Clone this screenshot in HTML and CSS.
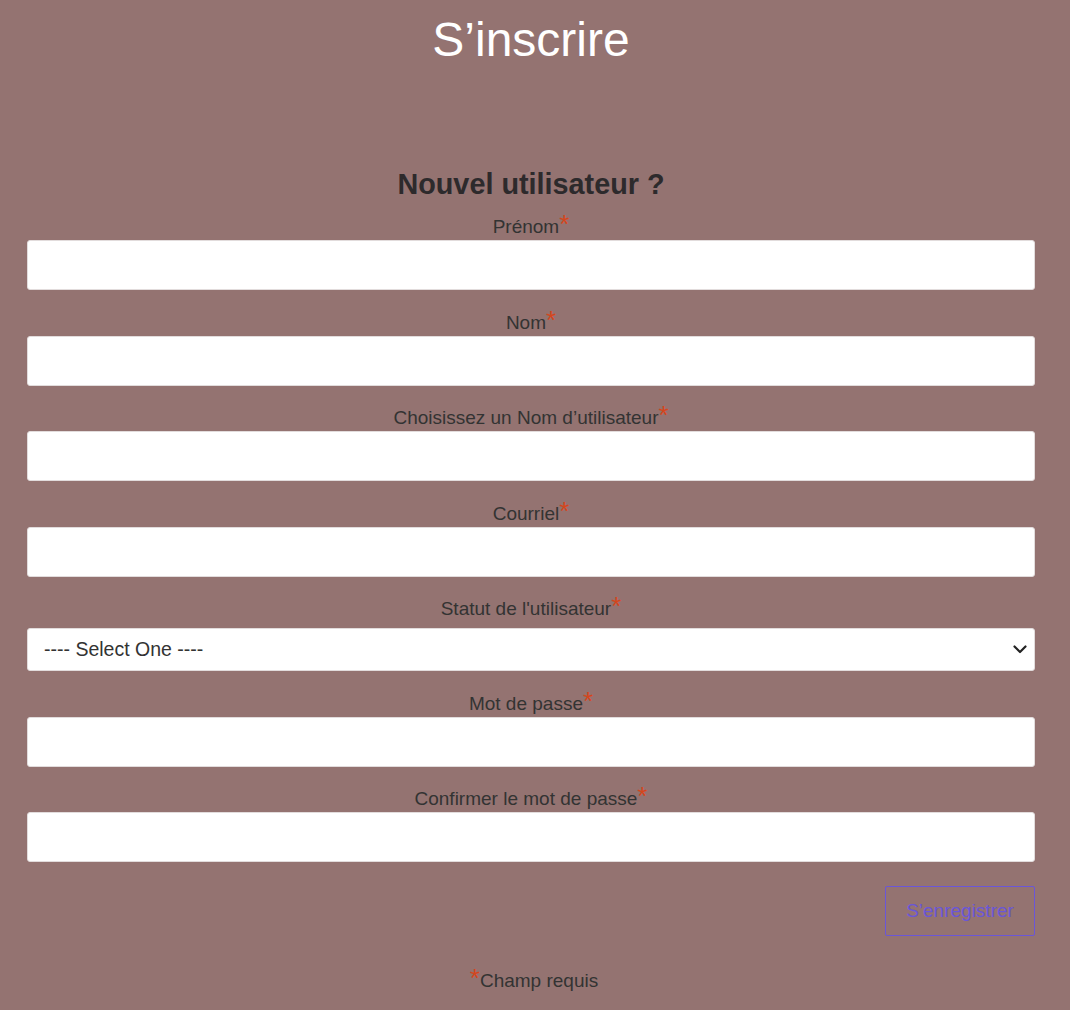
FILE: index.html
```html
<!DOCTYPE html>
<html lang="fr">
<head>
<meta charset="utf-8">
<title>S’inscrire</title>
<link rel="stylesheet" href="styles.css">
</head>
<body>
<div class="page">
  <h1 class="title">S’inscrire</h1>
  <form class="form">
    <h2 class="subtitle">Nouvel utilisateur ?</h2>
    <div class="field">
      <label class="label">Prénom<span class="req">*</span></label>
      <input class="input" type="text">
    </div>
    <div class="field">
      <label class="label">Nom<span class="req">*</span></label>
      <input class="input" type="text">
    </div>
    <div class="field">
      <label class="label">Choisissez un Nom d’utilisateur<span class="req">*</span></label>
      <input class="input" type="text">
    </div>
    <div class="field">
      <label class="label">Courriel<span class="req">*</span></label>
      <input class="input" type="email">
    </div>
    <div class="field">
      <label class="label">Statut de l'utilisateur<span class="req">*</span></label>
      <div class="select-wrap">
        <select class="select">
          <option>---- Select One ----</option>
        </select>
        <svg class="chevron" width="14" height="9" viewBox="0 0 14 9"><path d="M1.5 1.5 L7 7 L12.5 1.5" fill="none" stroke="#222" stroke-width="2.2" stroke-linecap="round" stroke-linejoin="round"/></svg>
      </div>
    </div>
    <div class="field">
      <label class="label">Mot de passe<span class="req">*</span></label>
      <input class="input" type="password">
    </div>
    <div class="field">
      <label class="label">Confirmer le mot de passe<span class="req">*</span></label>
      <input class="input" type="password">
    </div>
    <div class="actions">
      <button class="btn" type="button">S’enregistrer</button>
    </div>
    <p class="note"><span class="req">*</span>Champ requis</p>
  </form>
</div>
</body>
</html>
```

FILE: styles.css
```css
html, body {
  margin: 0;
  padding: 0;
  background: #947371;
}
body {
  font-family: "Liberation Sans", Arial, sans-serif;
  color: #333;
}
.page {
  margin-left: 27px;
  width: 1008px;
}
.title {
  margin: 12px 0 0;
  font-size: 48px;
  font-weight: normal;
  line-height: 55px;
  color: #fff;
  text-align: center;
}
.form {
  display: flex;
  flex-direction: column;
}
.subtitle {
  margin: 101px 0 15px;
  font-size: 28.8px;
  line-height: 33px;
  font-weight: bold;
  color: #2d2a2c;
  text-align: center;
}
.field {
  display: flex;
  flex-direction: column;
  margin-bottom: 21.5px;
}
.label {
  display: block;
  text-align: center;
  font-size: 19px;
  line-height: 22px;
  margin-bottom: 2px;
  color: #333;
}
.req {
  color: #d4461d;
  font-size: 26px;
  line-height: 0;
}
.input {
  box-sizing: border-box;
  width: 100%;
  height: 50px;
  margin: 0;
  border: 1px solid #e2dcdc;
  border-radius: 3px;
  background: #fff;
  font-family: inherit;
  font-size: 19px;
  padding: 0 16px;
}
.select-wrap {
  position: relative;
  margin-top: 5.5px;
  margin-bottom: 0.5px;
}
.select {
  box-sizing: border-box;
  display: block;
  width: 100%;
  height: 43px;
  margin: 0;
  -webkit-appearance: none;
  appearance: none;
  border: 1px solid #e2dcdc;
  border-radius: 3px;
  background: #fff;
  font-family: inherit;
  font-size: 19.5px;
  color: #333;
  padding: 0 16px;
}
.chevron {
  position: absolute;
  right: 8px;
  top: 17px;
  pointer-events: none;
}
.actions {
  display: flex;
  justify-content: flex-end;
  margin-top: 2.5px;
}
.btn {
  box-sizing: border-box;
  width: 150px;
  height: 50px;
  border: 1px solid #6a56d8;
  border-radius: 2px;
  background: transparent;
  color: #6a56d8;
  font-family: inherit;
  font-size: 19px;
  padding: 0;
}
.note {
  margin: 34px 0 0;
  padding-left: 6px;
  text-align: center;
  font-size: 19px;
  line-height: 22px;
  color: #333;
}
```
